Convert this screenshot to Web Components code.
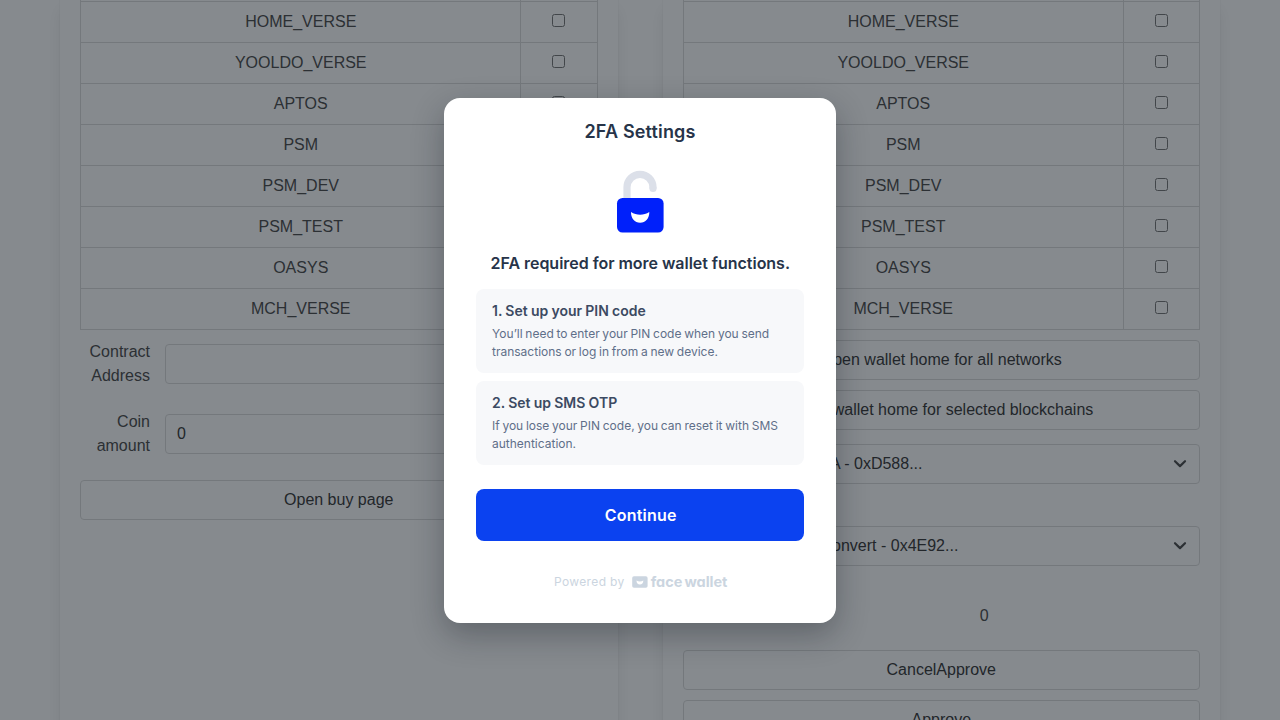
<!DOCTYPE html>
<html lang="en">
<head>
<meta charset="utf-8">
<title>2FA Settings</title>
<style>
html,body{margin:0;height:720px;overflow:hidden;background:#fff}
body{font:16px/24px "Liberation Sans",Arial,sans-serif;color:#4a4a4a}
</style>
</head>
<body>
<wallet-page></wallet-page>
<two-factor-dialog></two-factor-dialog>
<script>
const define = (name, html, setup) => {
  const t = document.createElement('template');
  t.innerHTML = html;
  customElements.define(name, class extends HTMLElement {
    constructor() {
      super();
      this.attachShadow({mode: 'open'}).append(t.content.cloneNode(true));
    }
    connectedCallback() { if (setup) setup(this, this.shadowRoot); }
  });
};

define('chain-table', `
<style>
:host{display:block;border:1px solid #dbdbdb;border-top:0;box-sizing:border-box}
.row{display:grid;grid-template-columns:1fr 75.5px;height:40px;border-bottom:1px solid #dbdbdb;text-align:center}
.row:last-child{border-bottom:0}
.row.cut{height:1px}
.name{line-height:40px;border-right:1px solid #dbdbdb;padding-left:.5px}
.check{display:flex;justify-content:center;padding-top:12px}
input{width:13px;height:13px;margin:0}
</style><div id="rows"></div>`, (el, root) => {
  const names = ['HOME_VERSE','YOOLDO_VERSE','APTOS','PSM','PSM_DEV','PSM_TEST','OASYS','MCH_VERSE'];
  root.getElementById('rows').innerHTML =
    '<div class="row cut"><div class="name"></div><div></div></div>' +
    names.map(n => `<div class="row"><div class="name">${n}</div><div class="check"><input type="checkbox"></div></div>`).join('');
});

define('page-card', `
<style>
:host{display:block;box-sizing:border-box;padding:0 20px;height:760px;background:#fff;
box-shadow:0 8px 16px -2px rgba(10,10,10,.1),0 0 0 1px rgba(10,10,10,.02)}
</style><slot></slot>`);

define('page-button', `
<style>
:host{display:block;box-sizing:border-box;height:40px;border:1px solid #dbdbdb;border-radius:4px;color:#363636;text-align:center;line-height:38px;background:#fff}
</style><slot></slot>`);

define('form-row', `
<style>
:host{display:grid;grid-template-columns:70px 1fr;gap:15px;align-items:center;text-align:right;height:48px}
.box{height:40px;box-sizing:border-box;border:1px solid #dbdbdb;border-radius:4px;padding:0 11px;line-height:38px;text-align:left;color:#363636}
</style><div><slot></slot></div><div class="box"><slot name="value"></slot></div>`);

define('select-row', `
<style>
:host{display:block;margin-left:85px}
.box{height:40px;box-sizing:border-box;border:1px solid #dbdbdb;border-radius:4px;padding:0 12px 0 var(--indent,11px);line-height:38px;color:#363636;display:flex;justify-content:space-between;align-items:center}
svg{display:block}
</style><div class="box"><slot></slot><svg width="14" height="10" viewBox="0 0 14 10" fill="none" stroke="#4a4a4a" stroke-width="2.2" stroke-linecap="round" stroke-linejoin="round"><path d="M2 2.200 7 7.100 12 2.200"/></svg></div>`);

define('wallet-page', `
<style>
:host{display:grid;grid-template-columns:1fr 1fr;gap:45px;padding:0 60px;height:720px;overflow:hidden}
.f1{margin-top:10px}.f2{margin-top:22px}.b0{margin-top:22px}
.b1{margin-top:10px}.s1{margin-top:14px}.s2{margin-top:42px}
.count{margin:38px 0 22px 86px;text-align:center}
</style>
<page-card>
<chain-table></chain-table>
<form-row class="f1">Contract<br>Address</form-row>
<form-row class="f2">Coin<br>amount<span slot="value">0</span></form-row>
<page-button class="b0">Open buy page</page-button>
</page-card>
<page-card>
<chain-table></chain-table>
<page-button class="b1">Open wallet home for all networks</page-button>
<page-button class="b1">Open wallet home for selected blockchains</page-button>
<select-row class="s1" style="--indent:61.500px">A - 0xD588...</select-row>
<select-row class="s2" style="--indent:52px">Convert - 0x4E92...</select-row>
<div class="count">0</div>
<page-button>CancelApprove</page-button>
<page-button class="b1">Approve</page-button>
</page-card>`);

define('setup-step', `
<style>
:host{display:block;box-sizing:border-box;height:84px;border-radius:8px;background:#f7f8fa;padding:11px 16px;color:#5f6f89;font-size:12px;line-height:18px}
.t{font-size:14px;line-height:22px;font-weight:600;color:#3c4a62;margin-bottom:3px;word-spacing:-.3px}
.d{word-spacing:-.65px}
</style><div class="t"><slot name="title"></slot></div><div class="d"><slot></slot></div>`);

define('lock-icon', `
<style>:host{display:block;width:48px;height:64px}svg{display:block}</style>
<svg width="48" height="64" viewBox="0 0 48 64"><path d="M11 32V17.300a13 13 0 0 1 26 0V18.500" fill="none" stroke="#dce0e9" stroke-width="7.200"/><circle cx="37" cy="18.500" r="3.600" fill="#dce0e9"/><rect x="1" y="28" width="46.600" height="34.600" rx="5.500" fill="#0020fa"/><path d="M15 42c5.500 3.500 12.800 3.500 18.300 0 .2 6.200-3.800 10.800-9.150 10.800S14.800 48.200 15 42Z" fill="#fff"/></svg>`);

define('powered-by', `
<style>
:host{display:flex;align-items:center;height:20px;padding-left:78px;color:#cbd5e0;font-size:12px;letter-spacing:.36px;white-space:nowrap}
svg{display:block;flex:none;margin:0 2.500px 0 7.500px}
.brand{font-size:14.500px;font-weight:700;letter-spacing:-.04px;word-spacing:-1.200px;font-feature-settings:"cv11"}
</style><span>Powered by</span>
<svg width="16" height="12" viewBox="0 0 16 12"><rect x=".2" y=".2" width="15.400" height="11.600" rx="1.800" fill="#cbd5e0"/><path d="M4.500 4.600c2.100 1.300 4.700 1.300 6.800 0 .1 2.400-1.400 4-3.400 4s-3.500-1.600-3.400-4Z" fill="#fff"/></svg>
<span class="brand">face wallet</span>`);

define('two-factor-dialog', `
<style>
:host{position:absolute;inset:0;display:grid;justify-content:center;align-content:start;padding-top:98px;box-sizing:border-box;background:rgba(14,21,30,.5);font-family:Inter,sans-serif}
.panel{width:392px;height:525px;box-sizing:border-box;padding:20px 32px 0;background:#fff;border-radius:16px;box-shadow:0 12px 32px rgba(15,23,30,.32)}
h1{margin:0;font-size:18px;line-height:27px;font-weight:600;text-align:center;color:#273449;letter-spacing:.16px}
lock-icon{margin:25px auto 0}
h2{margin:17px 0 0;font-size:16px;line-height:24px;font-weight:600;text-align:center;color:#273449;letter-spacing:-.03px;text-indent:.5px}
.steps{display:grid;gap:8px;margin-top:14px}
button{display:block;width:100%;height:52px;margin:24px 0 31px;padding:0;border:0;border-radius:8px;background:#0b42f0;color:#fff;font:600 16px/24px Inter,sans-serif;letter-spacing:.2px;text-indent:1.500px}
</style>
<div class="panel">
<h1>2FA Settings</h1>
<lock-icon></lock-icon>
<h2>2FA required for more wallet functions.</h2>
<div class="steps">
<setup-step><span slot="title">1. Set up your PIN code</span>You’ll need to enter your PIN code when you send transactions or log in from a new device.</setup-step>
<setup-step><span slot="title">2. Set up SMS OTP</span>If you lose your PIN code, you can reset it with SMS authentication.</setup-step>
</div>
<button>Continue</button>
<powered-by></powered-by>
</div>`);
</script>
</body>
</html>
